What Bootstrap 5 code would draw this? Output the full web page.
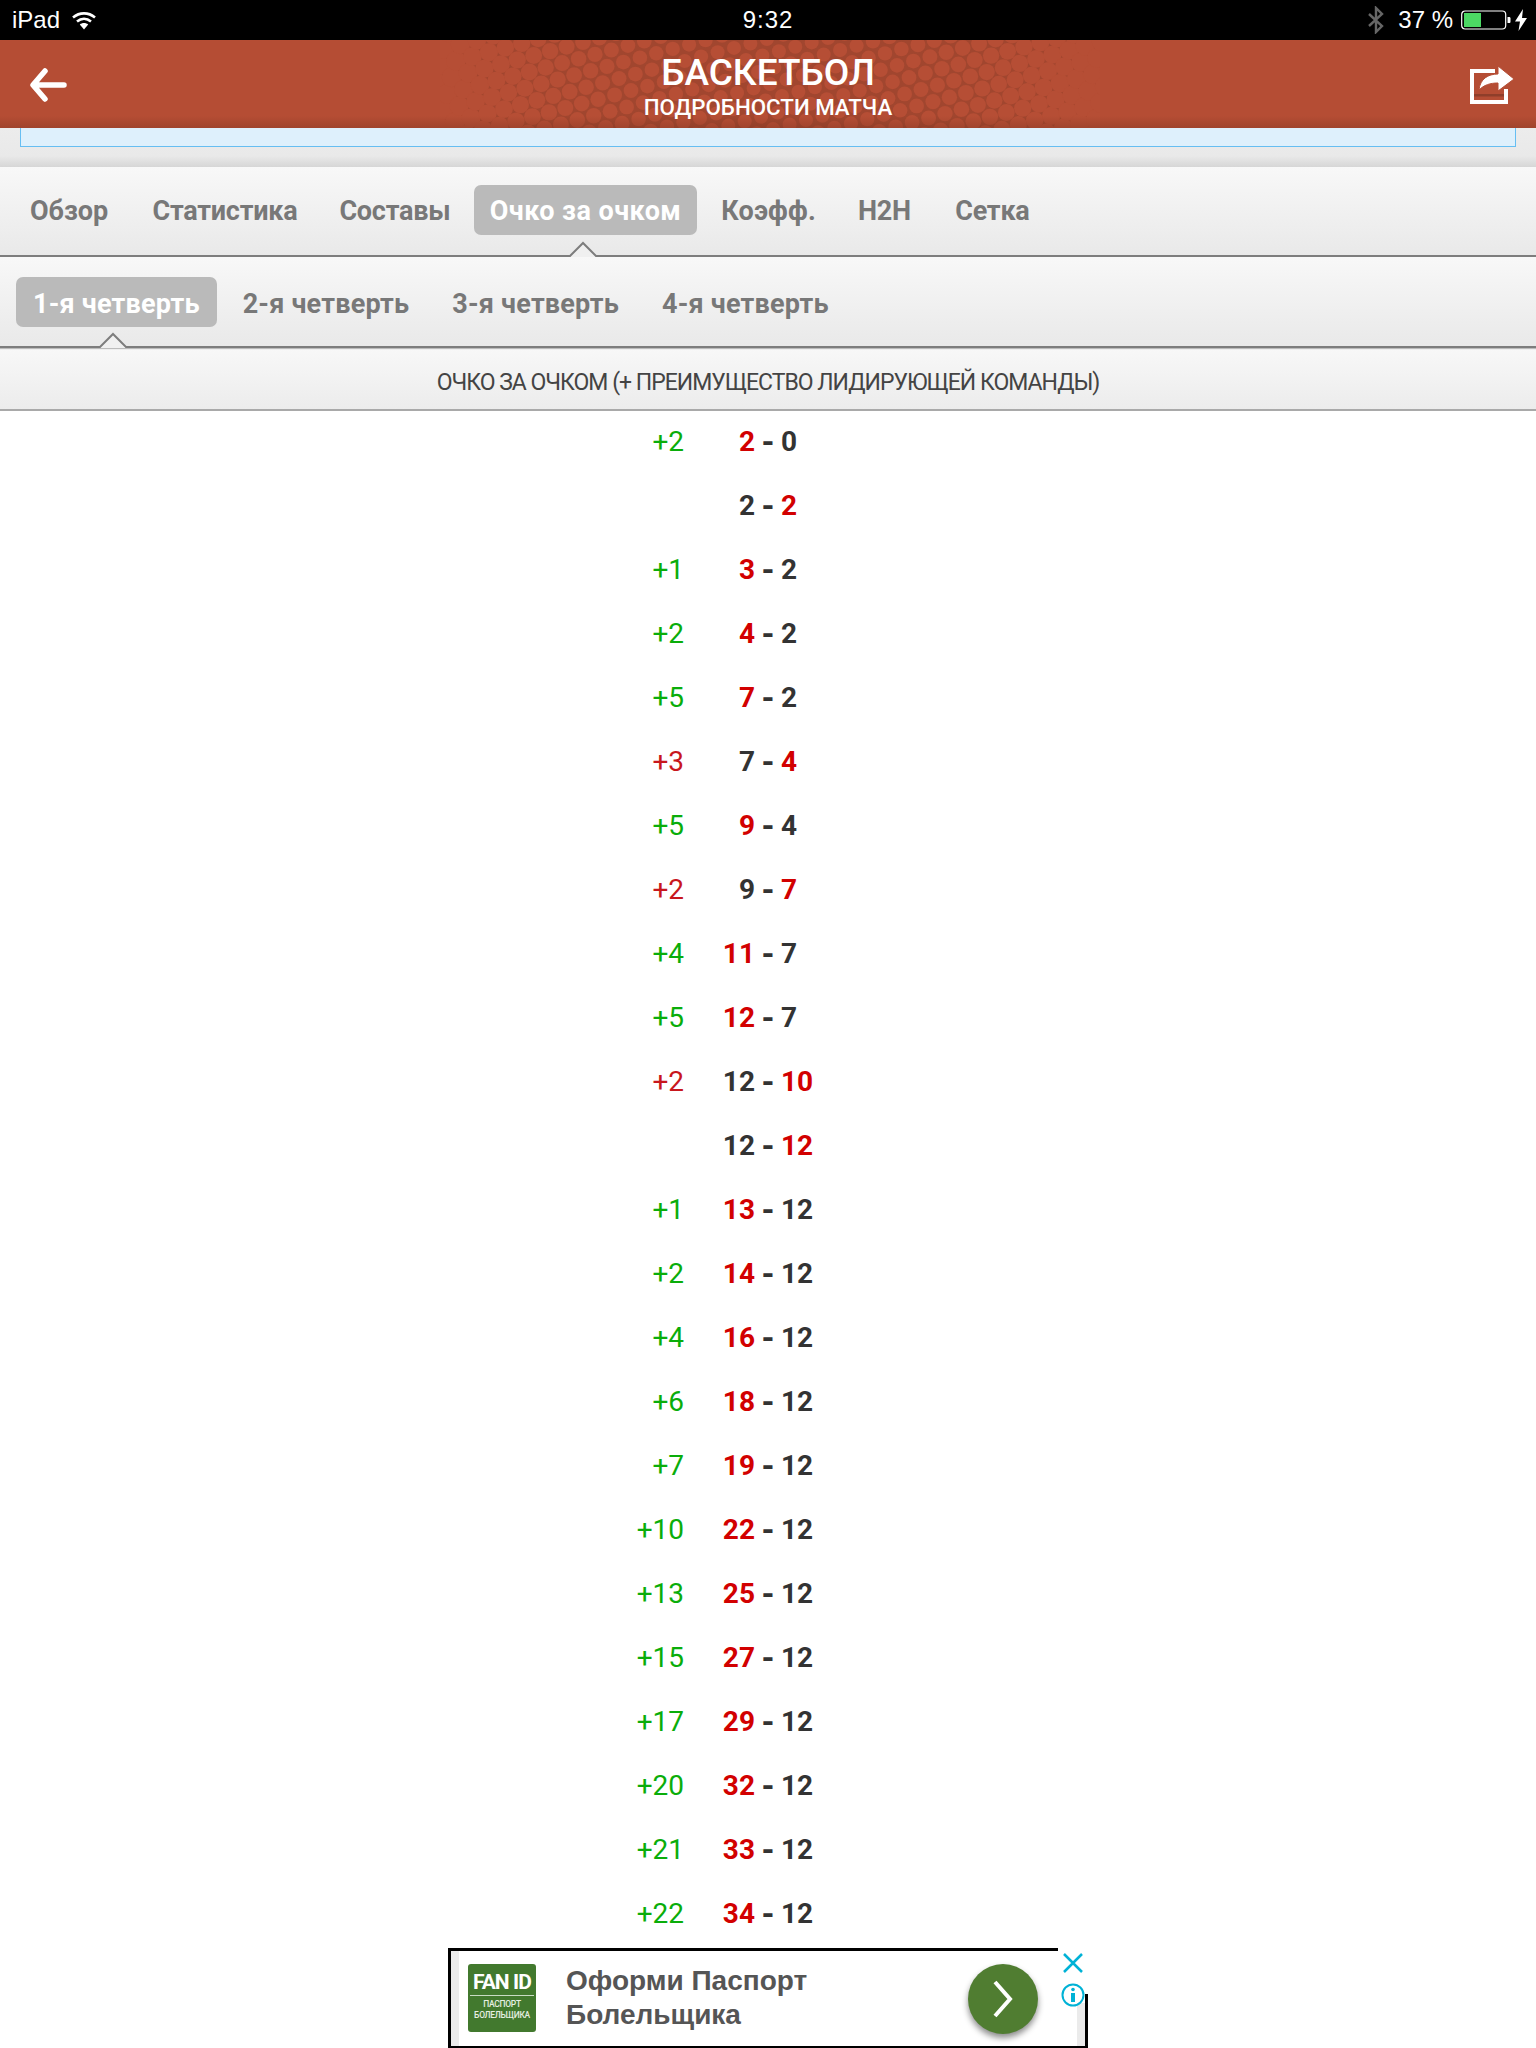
<!DOCTYPE html>
<html lang="ru">
<head>
<meta charset="utf-8">
<title>Баскетбол</title>
<link href="https://cdn.jsdelivr.net/npm/bootstrap@5.3.0/dist/css/bootstrap.min.css" rel="stylesheet">
<style>
html,body{margin:0;background:#fff;}
body{width:1536px;height:2048px;overflow:hidden;font-family:Roboto,"Liberation Sans",sans-serif;position:relative;}
.statusbar{height:40px;background:#000;color:#fff;font-family:"Liberation Sans",sans-serif;font-size:24px;padding:0 9px 0 12px;position:relative;}
.statusbar .clock{position:absolute;left:0;right:0;top:0;line-height:40px;text-align:center;font-size:24px;letter-spacing:1px;}
.wifi-ico{margin-left:11px;}
.pct-text{margin:0 8px 0 13px;}
.appbar{height:88px;background:#b54d34;position:relative;overflow:hidden;color:#fff;}
.halftone{position:absolute;left:440px;top:0;}
.appbar-shade{position:absolute;left:0;right:0;bottom:0;height:12px;background:linear-gradient(rgba(120,50,30,0),rgba(120,50,30,.35));}
.title-main{position:absolute;top:13px;left:0;right:0;text-align:center;font-size:37px;font-weight:500;line-height:40px;}
.title-sub{position:absolute;top:54px;left:0;right:0;text-align:center;font-size:22.3px;font-weight:500;line-height:26px;}
.back-ico{position:absolute;left:29px;top:28px;}
.share-ico{position:absolute;left:1468px;top:23px;}
.notice-wrap{height:39px;background:linear-gradient(#ececec 0,#e9e9e9 28px,#d6d6d6 39px);padding:0 20px;}
.notice-box{height:19px;background:#def0fc;border:1px solid #66bef2;border-top:0;}
.tabbar{background:linear-gradient(#f8f8f8,#e9e9e9);position:relative;border-bottom:2px solid #7d7d7d;box-shadow:0 1px 1px #bbb;}
.tabbar-main{height:90px;padding:18px 0 0 9px;}
.tabbar-sub{height:91px;padding:20px 0 0 11.500px;}
.tab-item{height:50px;line-height:52px;padding:0 16px;margin:0 5px;font-size:27px;font-weight:700;color:#787878;white-space:nowrap;border-radius:7px;letter-spacing:-.25px;}
.tabbar-main .tab-item:nth-child(1){margin-right:7.500px;letter-spacing:-.05px;}
.tabbar-main .tab-item:nth-child(3){margin-right:2.500px;}
.tabbar-main .tab-item:nth-child(5){margin-left:3px;letter-spacing:.15px;}
.tabbar-main .tab-item:nth-child(6){margin-right:7.500px;}
.tabbar-sub .tab-item{padding:0 17px;margin:0 4.500px;letter-spacing:.2px;line-height:54px;}
.tab-item.is-on{background:#bababa;color:#fff;}
.tabbar-main .tab-item.is-on{letter-spacing:.45px;}
.tab-notch{position:absolute;bottom:-2px;width:36px;height:16px;}
.col-head{height:63px;background:linear-gradient(#f8f8f8,#ececec);border-bottom:2px solid #a9a9a9;text-align:center;font-size:23px;line-height:69px;color:#444;letter-spacing:-1px;}
.pt-wrap{margin-top:-1px;}
.pt-row{height:64px;display:grid;grid-template-columns:1fr 26px 1fr;align-items:center;font-size:28px;line-height:64px;}
.pt-home{display:flex;justify-content:flex-end;}
.pt-lead{font-weight:400;margin-right:-1px;}
.pt-num{width:72px;text-align:right;}
.pt-dash,.pt-num,.pt-away{font-weight:700;color:#333;}
.pt-dash{text-align:center;font-size:33px;line-height:60px;}
.up{color:#0aad0a;}.down{color:#c8171d;}
.pt-num.hot,.pt-away.hot{color:#d20000;}
.adbox{position:absolute;left:448px;top:1948px;width:640px;height:100px;background:#fff;border:3px solid #000;border-bottom-width:2px;}
.ad-strip-l{position:absolute;left:0;top:0;bottom:0;width:8px;background:#ebebeb;}
.ad-strip-r{position:absolute;right:0;top:52px;bottom:0;width:8px;background:#ebebeb;}
.ad-logo{position:absolute;left:17px;top:13px;width:68px;height:68px;background:#42792e;border-radius:3px;color:#fff;text-align:center;font-family:Roboto,sans-serif;}
.ad-logo-a{font-size:21px;font-weight:700;line-height:22px;padding-top:7px;letter-spacing:-.9px;white-space:nowrap;}
.ad-logo-rule{height:1px;background:#c9dcc4;margin:2px 2px 3px;}
.ad-logo-b{font-size:8.500px;line-height:11px;font-weight:500;letter-spacing:-.3px;white-space:nowrap;color:#e6efe2;}
.ad-copy{position:absolute;left:115px;top:13px;font-family:"Liberation Sans",sans-serif;font-weight:700;font-size:28px;line-height:34px;color:#555;}
.ad-go{position:absolute;left:517px;top:13px;width:70px;height:70px;border-radius:50%;background:#507d31;box-shadow:0 4px 6px rgba(0,0,0,.45);}
.ad-cover{position:absolute;left:1058px;top:1946px;width:32px;height:48px;background:#fff;}
.ad-ico{position:absolute;}
</style>
</head>
<body>
<div class="statusbar d-flex align-items-center">
  <span>iPad</span>
  <svg class="wifi-ico" width="26" height="20" viewBox="0 0 26 20"><g fill="none" stroke="#fff" stroke-width="2.600"><path d="M2 7.500C8.500 2 17.500 2 24 7.500"/><path d="M6 11.500c4.300-3.500 9.700-3.500 14 0"/></g><path d="M8.800 14.500c2.500-2 5.900-2 8.400 0L13 19.500z" fill="#fff"/></svg>
  <span class="clock">9:32</span>
  <span class="ms-auto d-flex align-items-center">
    <svg width="18" height="28" viewBox="0 0 18 28"><path d="M2 8l13 12-6 6V2l6 6L2 20" fill="none" stroke="#666" stroke-width="2.400"/></svg>
    <span class="pct-text">37 %</span>
    <svg width="50" height="20" viewBox="0 0 50 20"><rect x=".7" y="1" width="44" height="18" rx="3.500" fill="none" stroke="#fff" stroke-width="1.200"/><rect x="3" y="3" width="17" height="14" fill="#4cd964"/><path d="M46.500 7h1.500c1 0 1.500 .5 1.500 1.500v3c0 1-.5 1.500-1.500 1.500h-1.500z" fill="#fff"/></svg>
    <svg class="ms-1" width="12" height="22" viewBox="0 0 12 22"><path d="M8 0L0 12.500h5L3.500 22 12 9H7z" fill="#fff"/></svg>
  </span>
</div>
<div class="appbar">
  <svg class="halftone" id="ht" width="660" height="88" viewBox="0 0 660 88"></svg>
  <div class="appbar-shade"></div>
  <div class="title-main">БАСКЕТБОЛ</div>
  <div class="title-sub">ПОДРОБНОСТИ МАТЧА</div>
  <svg class="back-ico" width="38" height="34" viewBox="0 0 38 34"><path d="M16 3L4 17l12 14M5 17h30" fill="none" stroke="#fff" stroke-width="5.500" stroke-linecap="round" stroke-linejoin="round"/></svg>
  <svg class="share-ico" width="48" height="42" viewBox="0 0 48 42"><path d="M27 8H4v31h34V26" fill="none" stroke="#fff" stroke-width="4"/><path d="M11 27c1-11 9-16 19-16V3l16 13-16 12v-8c-8 0-14 2-19 7z" fill="#fff" stroke="#b54d34" stroke-width="1"/><rect x="6" y="31" width="30" height="2.500" fill="#8f3e2a"/></svg>
</div>
<div class="notice-wrap"><div class="notice-box"></div></div>
<div class="tabbar tabbar-main d-flex">
  <div class="tab-item">Обзор</div>
  <div class="tab-item">Статистика</div>
  <div class="tab-item">Составы</div>
  <div class="tab-item is-on">Очко за очком</div>
  <div class="tab-item">Коэфф.</div>
  <div class="tab-item">H2H</div>
  <div class="tab-item">Сетка</div>
  <svg class="tab-notch" style="left:565px" viewBox="0 0 36 16"><path d="M0 14h4L18 1l14 13h4v2H0z" fill="#f0f0f0"/><path d="M0 15h5L18 2l13 13h5" fill="none" stroke="#7d7d7d" stroke-width="2"/></svg>
</div>
<div class="tabbar tabbar-sub d-flex">
  <div class="tab-item is-on">1-я четверть</div>
  <div class="tab-item">2-я четверть</div>
  <div class="tab-item">3-я четверть</div>
  <div class="tab-item">4-я четверть</div>
  <svg class="tab-notch" style="left:95px" viewBox="0 0 36 16"><path d="M0 14h4L18 1l14 13h4v2H0z" fill="#f0f0f0"/><path d="M0 15h5L18 2l13 13h5" fill="none" stroke="#7d7d7d" stroke-width="2"/></svg>
</div>
<div class="col-head">ОЧКО ЗА ОЧКОМ (+ ПРЕИМУЩЕСТВО ЛИДИРУЮЩЕЙ КОМАНДЫ)</div>
<div id="rows" class="pt-wrap"></div>
<div class="adbox">
  <div class="ad-strip-l"></div>
  <div class="ad-strip-r"></div>
  <div class="ad-logo">
    <div class="ad-logo-a">FAN ID</div>
    <div class="ad-logo-rule"></div>
    <div class="ad-logo-b">ПАСПОРТ<br>БОЛЕЛЬЩИКА</div>
  </div>
  <div class="ad-copy">Оформи Паспорт<br>Болельщика</div>
  <div class="ad-go d-flex align-items-center justify-content-center">
    <svg width="22" height="40" viewBox="0 0 22 40"><path d="M3 3l15 17L3 37" fill="none" stroke="#fff" stroke-width="4"/></svg>
  </div>
</div>
<div class="ad-cover"></div>
<svg class="ad-ico" style="left:1063px;top:1953px" width="20" height="20" viewBox="0 0 20 20"><path d="M1 1l18 18M19 1L1 19" stroke="#00b2d6" stroke-width="2.500"/></svg>
<svg class="ad-ico" style="left:1061px;top:1983px" width="24" height="24" viewBox="0 0 24 24"><circle cx="12" cy="12" r="10.500" fill="#fff" stroke="#00b2d6" stroke-width="2"/><circle cx="12" cy="6.500" r="1.800" fill="#00b2d6"/><rect x="10" y="10" width="4" height="9" fill="#00b2d6"/></svg>
<script src="https://cdn.jsdelivr.net/npm/bootstrap@5.3.0/dist/js/bootstrap.bundle.min.js"></script>
<script>
var data=[["+2","u",2,0,"h"],["","",2,2,"a"],["+1","u",3,2,"h"],["+2","u",4,2,"h"],["+5","u",7,2,"h"],["+3","d",7,4,"a"],["+5","u",9,4,"h"],["+2","d",9,7,"a"],["+4","u",11,7,"h"],["+5","u",12,7,"h"],["+2","d",12,10,"a"],["","",12,12,"a"],["+1","u",13,12,"h"],["+2","u",14,12,"h"],["+4","u",16,12,"h"],["+6","u",18,12,"h"],["+7","u",19,12,"h"],["+10","u",22,12,"h"],["+13","u",25,12,"h"],["+15","u",27,12,"h"],["+17","u",29,12,"h"],["+20","u",32,12,"h"],["+21","u",33,12,"h"],["+22","u",34,12,"h"]];
document.getElementById('rows').innerHTML=data.map(function(r){
  return '<div class="pt-row"><div class="pt-home"><span class="pt-lead '+(r[1]=='u'?'up':'down')+'">'+r[0]+'</span><span class="pt-num '+(r[4]=='h'?'hot':'')+'">'+r[2]+'</span></div><div class="pt-dash">-</div><div class="pt-away '+(r[4]=='a'?'hot':'')+'">'+r[3]+'</div></div>';
}).join('');
var s='<rect width="660" height="88" fill="#a1462f"/>',a=-0.26,st=17,c=Math.cos(a),n=Math.sin(a);
for(var i=-70;i<70;i++)for(var j=-30;j<30;j++){
  var u=(i+j*.5)*st,v=j*st*.866,x=330+u*c-v*n,y=44+u*n+v*c;
  if(x<-14||x>674||y<-14||y>102)continue;
  var d=Math.min(1,Math.abs(x-330)/325),rad=7+Math.pow(d,2.4)*3;
  s+='<circle cx="'+x.toFixed(1)+'" cy="'+y.toFixed(1)+'" r="'+rad.toFixed(1)+'" fill="#b64e35"/>';
}
document.getElementById('ht').innerHTML=s;
</script>
</body>
</html>
